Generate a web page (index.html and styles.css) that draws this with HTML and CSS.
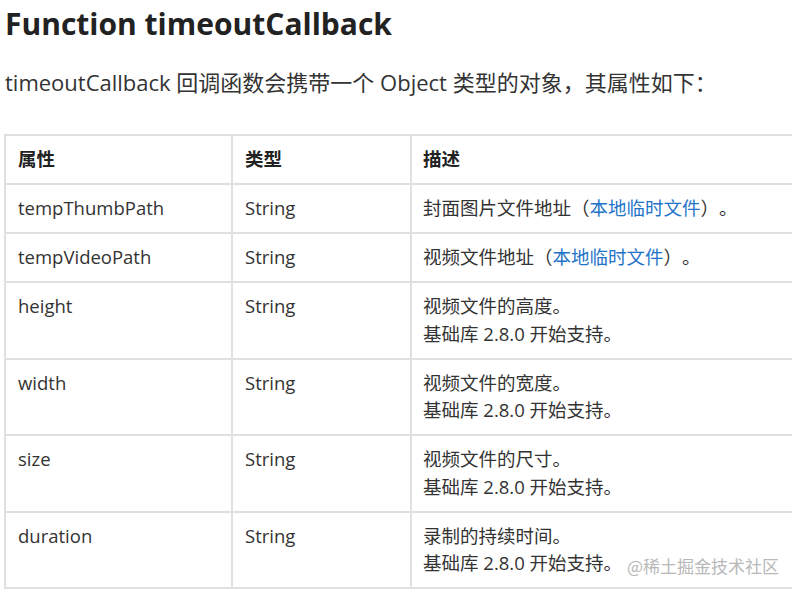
FILE: index.html
```html
<!DOCTYPE html>
<html lang="zh">
<head>
<meta charset="utf-8">
<link rel="stylesheet" href="styles.css">
</head>
<body>
<h1 class="title">Function timeoutCallback</h1>
<p class="intro">timeoutCallback 回调函数会携带一个 Object 类型的对象，其属性如下：</p>
<div class="table-wrap">
<table class="props">
  <colgroup>
    <col class="c1"><col class="c2"><col class="c3">
  </colgroup>
  <thead>
    <tr><th>属性</th><th>类型</th><th>描述</th></tr>
  </thead>
  <tbody>
    <tr><td>tempThumbPath</td><td>String</td><td>封面图片文件地址（<a class="link" href="#">本地临时文件</a>）。</td></tr>
    <tr><td>tempVideoPath</td><td>String</td><td>视频文件地址（<a class="link" href="#">本地临时文件</a>）。</td></tr>
    <tr><td>height</td><td>String</td><td>视频文件的高度。<br>基础库 2.8.0 开始支持。</td></tr>
    <tr><td>width</td><td>String</td><td>视频文件的宽度。<br>基础库 2.8.0 开始支持。</td></tr>
    <tr><td>size</td><td>String</td><td>视频文件的尺寸。<br>基础库 2.8.0 开始支持。</td></tr>
    <tr><td>duration</td><td>String</td><td>录制的持续时间。<br>基础库 2.8.0 开始支持。</td></tr>
  </tbody>
</table>
</div>
<div class="watermark">@稀土掘金技术社区</div>
</body>
</html>
```

FILE: styles.css
```css
html, body {
  margin: 0;
  padding: 0;
  background: #fff;
  overflow: hidden;
}
body {
  width: 792px;
  height: 594px;
  position: relative;
  padding: 0 0 0 4px;
  box-sizing: border-box;
  font-family: "Open Sans", "Noto Sans CJK SC", sans-serif;
  color: #333;
  text-spacing-trim: space-all;
}
.title {
  margin: 0 0 0 1px;
  padding-top: 4px;
  font-size: 30px;
  line-height: 40px;
  font-weight: 700;
  color: #222;
}
.intro {
  margin: 23px 0 0 1px;
  font-size: 22px;
  line-height: 30px;
  color: #333;
}
.table-wrap {
  margin-top: 37px;
  width: 1000px;
}
.props {
  border-collapse: collapse;
  width: 1000px;
  table-layout: fixed;
  font-size: 18.5px;
  line-height: 27.5px;
}
.c1 { width: 227px; }
.c2 { width: 179px; }
.props th, .props td {
  border: 2px solid #e0e0e0;
  padding: 9px 12px 10.5px 12px;
  text-align: left;
  vertical-align: top;
  color: #333;
}
.props td:last-child, .props th:last-child {
  padding-left: 11px;
}
.props th {
  font-weight: 700;
  color: #222;
}
.link {
  color: #1f74c9;
  text-decoration: none;
}
.watermark {
  position: absolute;
  left: 627px;
  top: 553px;
  font-size: 17px;
  line-height: 26px;
  color: #b8b8b8;
  font-family: "Noto Sans CJK SC", sans-serif;
}
```
